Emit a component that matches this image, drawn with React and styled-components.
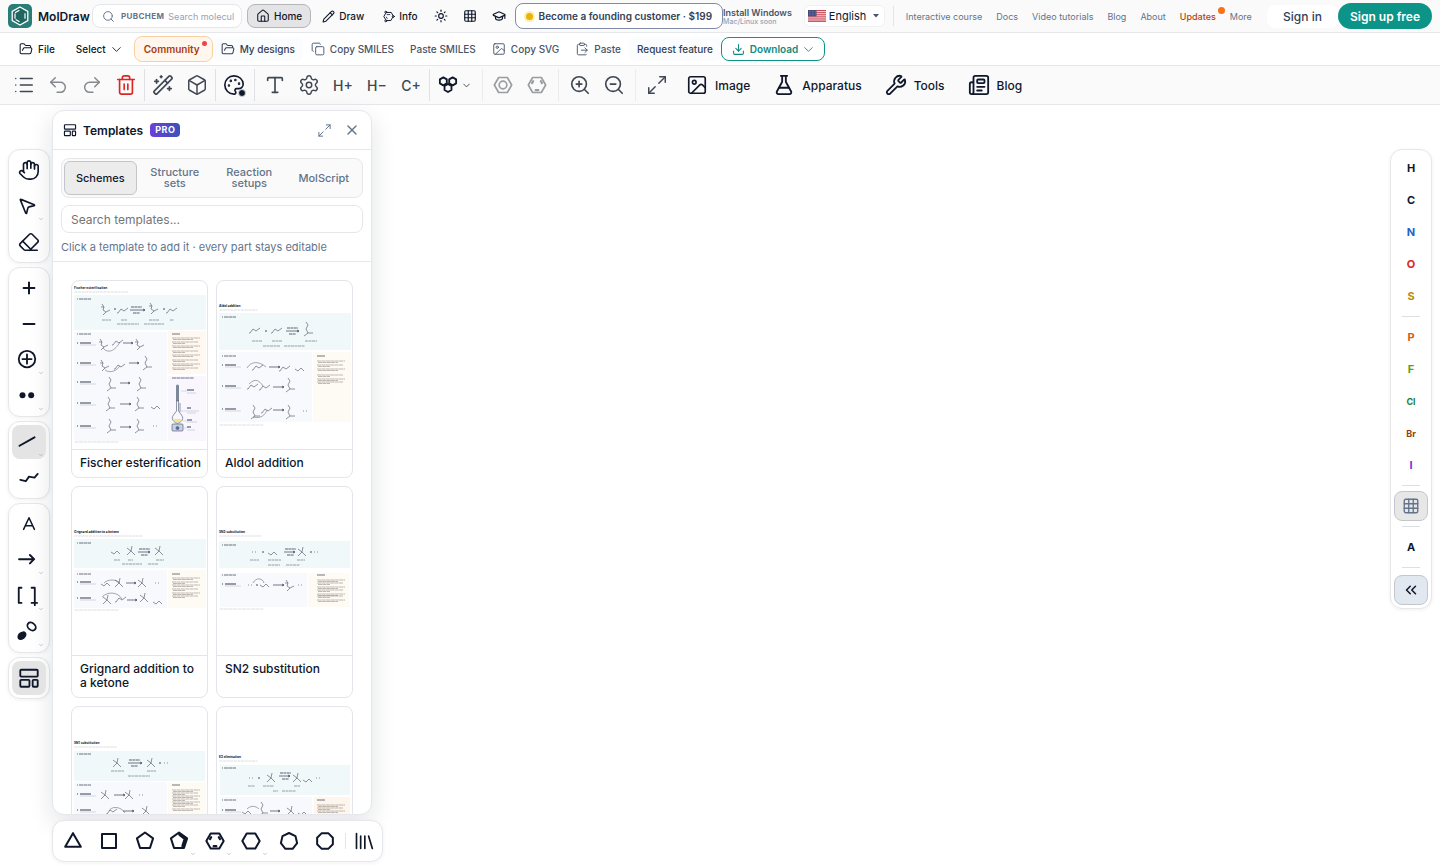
import React from "react";
import styled, { createGlobalStyle, css } from "styled-components";
import {
  Box,
  ChevronDown,
  ChevronsLeft,
  ClipboardPaste,
  Copy,
  Download,
  Eraser,
  FlaskConical,
  FolderOpen,
  GraduationCap,
  Grid3x3,
  Hand,
  House,
  Image as ImageIcon,
  List,
  Maximize2,
  MousePointer2,
  Newspaper,
  Palette,
  Pencil,
  Redo2,
  Search,
  Settings,
  Sun,
  Trash2,
  Type,
  Undo2,
  WandSparkles,
  Wrench,
  X,
  ZoomIn,
  ZoomOut,
} from "lucide-react";

const GlobalStyle = createGlobalStyle`
  * {
    box-sizing: border-box;
  }
  body {
    margin: 0;
    background: #fff;
    color: #0f172a;
    font-family: Inter, "Liberation Sans", sans-serif;
  }
  button, input, select {
    font-family: inherit;
    color: inherit;
    margin: 0;
  }
  button {
    cursor: pointer;
  }
  svg {
    display: block;
    flex-shrink: 0;
  }
`;

/* ---------- page ---------- */

const Page = styled.div`
  display: flex;
  flex-direction: column;
  height: 100vh;
  min-height: 620px;
  overflow: hidden;
`;

const Bar = styled.header`
  display: flex;
  align-items: center;
  flex-shrink: 0;
  height: 33px;
  padding: 0 8px;
  white-space: nowrap;
  background: #fafafa;
  border-bottom: 1px solid #e5e7eb;
`;

const FileRow = styled(Bar)`
  padding: 0 11px;
  background: #fff;
`;

const Spacer = styled.div`
  flex: 1;
`;

/* ---------- top bar ---------- */

const Brand = styled.a`
  display: flex;
  align-items: center;
  flex-shrink: 0;
  gap: 6px;
  width: 84px;
  font-size: 12px;
  font-weight: 600;
  color: #0f172a;
  text-decoration: none;
`;

const SearchBox = styled.label`
  display: flex;
  align-items: center;
  flex-shrink: 0;
  gap: 4px;
  width: 150px;
  height: 24px;
  padding: 0 7px 0 9px;
  background: #fff;
  border: 1px solid #e5e7eb;
  border-radius: 8px;
  color: #64748b;
`;

const SearchTag = styled.span`
  padding-left: 2px;
  font-size: 8px;
  font-weight: 700;
  letter-spacing: 0.4px;
`;

const SearchInput = styled.input`
  flex: 1;
  min-width: 0;
  padding: 0;
  border: 0;
  outline: 0;
  background: none;
  font-size: 9px;
  &::placeholder {
    color: #94a3b8;
  }
`;

const NavButton = styled.button`
  display: flex;
  align-items: center;
  justify-content: center;
  flex-shrink: 0;
  gap: 4px;
  height: 24px;
  padding: 0 8px;
  background: none;
  border: 1px solid transparent;
  border-radius: 8px;
  font-size: 10px;
  font-weight: 500;
  ${(p) =>
    p.$active &&
    css`
      margin: 0 2px 0 5px;
      background: #e4e4e6;
      border-color: #b4b6ba;
    `}
`;

const IconNav = styled(NavButton)`
  width: 29px;
  padding: 0;
`;

const FounderPill = styled.button`
  display: flex;
  align-items: center;
  flex-shrink: 0;
  gap: 5px;
  height: 26px;
  margin-left: 1px;
  padding: 0 10px 0 9px;
  background: #fff;
  border: 1px solid #7f8ba8;
  border-radius: 8px;
  color: #334155;
  font-size: 10px;
  font-weight: 600;
`;

const GoldDot = styled.span`
  width: 7px;
  height: 7px;
  margin: 0 1px;
  border-radius: 50%;
  background: #eab308;
  box-shadow: 0 0 0 2px #fdeeb5;
`;

const Install = styled.a`
  display: flex;
  flex-direction: column;
  color: #475569;
  font-size: 9px;
  font-weight: 600;
  line-height: 10px;
  text-decoration: none;
  small {
    color: #94a3b8;
    font-size: 7px;
    font-weight: 500;
    line-height: 7px;
  }
`;

const Language = styled.label`
  display: flex;
  align-items: center;
  flex-shrink: 0;
  gap: 3px;
  height: 22px;
  margin-left: 12px;
  padding: 0 5px 0 3px;
  background: #fff;
  border: 1px solid #f0f1f3;
  border-radius: 6px;
`;

const LanguageSelect = styled.select`
  width: 41px;
  padding: 0;
  appearance: none;
  border: 0;
  outline: 0;
  background: none;
  font-size: 11px;
`;

const TopLinks = styled.nav`
  display: flex;
  align-items: center;
  gap: 14px;
  margin-left: 8px;
  padding-left: 12px;
  border-left: 1px solid #e2e4e8;
  height: 20px;
`;

const TopLink = styled.a`
  position: relative;
  color: ${(p) => (p.$hot ? "#b2410e" : "#64748b")};
  font-size: 9px;
  font-weight: ${(p) => (p.$hot ? 500 : 400)};
  text-decoration: none;
`;

const Badge = styled.i`
  position: absolute;
  top: ${(p) => p.$top}px;
  right: ${(p) => p.$right}px;
  width: ${(p) => p.$size}px;
  height: ${(p) => p.$size}px;
  border-radius: 50%;
  background: ${(p) => p.$color};
`;

const SignIn = styled.a`
  padding: 4px 16px;
  background: #fff;
  border-radius: 8px;
  color: #334155;
  font-size: 12px;
  font-weight: 500;
  text-decoration: none;
`;

const SignUp = styled.button`
  height: 26px;
  padding: 0 12px;
  background: #0d9488;
  border: 0;
  border-radius: 13px;
  color: #fff;
  font-size: 12px;
  font-weight: 600;
`;

/* ---------- file bar ---------- */

const FileButton = styled.button`
  position: relative;
  display: flex;
  align-items: center;
  gap: 5px;
  height: 24px;
  padding: 0 8px;
  background: ${(p) => (p.$soft ? "#fafcfe" : "none")};
  border: 0;
  border-radius: 6px;
  color: ${(p) => p.$color || "#475569"};
  font-size: 10px;
  font-weight: 500;
`;

const SelectButton = styled(FileButton)`
  margin: 0 4px 0 5px;
`;

const DropArrow = styled(ChevronDown)`
  margin: 0 -2px;
`;

const CommunityButton = styled(FileButton)`
  height: 26px;
  padding: 0 12px 0 9px;
  background: #fff7ed;
  border: 1px solid #fbd0a0;
  border-radius: 8px;
  font-weight: 600;
`;

const DownloadButton = styled(FileButton)`
  padding: 0 10px;
  background: #fff;
  border: 1px solid #0d9488;
  border-radius: 8px;
  font-weight: 600;
`;

/* ---------- drawing toolbar ---------- */

const Toolbar = styled.div`
  display: flex;
  align-items: center;
  flex-shrink: 0;
  height: 39px;
  padding: 0 7px;
  background: #fafafa;
  border-bottom: 1px solid #e5e7eb;
  white-space: nowrap;
`;

const ToolButton = styled.button`
  position: relative;
  display: flex;
  align-items: center;
  justify-content: center;
  gap: 3px;
  width: ${(p) => (p.$wide ? 48 : 34)}px;
  height: 34px;
  padding: 0;
  background: none;
  border: 0;
  color: ${(p) => p.$color || "#3f4754"};
  font-size: 14px;
  font-weight: 500;
`;

const Divider = styled.span`
  width: 1px;
  height: 32px;
  margin: 0 ${(p) => p.$space}px;
  background: ${(p) => (p.$faint ? "#ececef" : "#dfe1e4")};
`;

const WideTool = styled.button`
  display: flex;
  align-items: center;
  gap: 7px;
  height: 34px;
  padding: 0 11px 0 12px;
  background: none;
  border: 0;
  font-size: 12px;
  font-weight: 500;
`;

const InkDot = styled.i`
  position: absolute;
  right: 5px;
  bottom: 5px;
  width: 8px;
  height: 8px;
  border: 1px solid #d5d7db;
  border-radius: 50%;
  background: #0f172a;
`;

/* ---------- workspace ---------- */

const Workspace = styled.main`
  display: flex;
  align-items: flex-start;
  flex: 1;
  min-height: 0;
  padding: 0 8px;
`;

const Rail = styled.aside`
  display: flex;
  flex-direction: column;
  gap: 4px;
  padding-top: 44px;
`;

const RailGroup = styled.div`
  display: flex;
  flex-direction: column;
  align-items: center;
  gap: 2px;
  width: 42px;
  padding: 3px;
  background: #fff;
  border: 1px solid #e5e7eb;
  border-radius: 12px;
  box-shadow: 0 1px 4px rgba(15, 23, 42, 0.06);
`;

const RailButton = styled.button`
  position: relative;
  display: flex;
  align-items: center;
  justify-content: center;
  width: 34px;
  height: 34px;
  padding: 0 ${(p) => (p.$more ? 4 : 0)}px 0 0;
  background: ${(p) => (p.$active ? "#e4e4e5" : "none")};
  border: 0;
  border-radius: 8px;
`;

const MoreMark = styled(ChevronDown)`
  position: absolute;
  right: 2px;
  bottom: 1px;
  color: #8a929e;
`;

const Column = styled.div`
  display: flex;
  flex-direction: column;
  align-items: flex-start;
  gap: 5px;
  height: 100%;
  margin-left: 2px;
  padding: 5px 0 6px;
`;

const Panel = styled.section`
  display: flex;
  flex-direction: column;
  flex: 1;
  width: 320px;
  min-height: 0;
  overflow: hidden;
  background: #fff;
  border: 1px solid #e5e7eb;
  border-radius: 12px;
  box-shadow: 0 8px 24px rgba(15, 23, 42, 0.12);
`;

const PanelHeader = styled.div`
  display: flex;
  align-items: center;
  flex-shrink: 0;
  height: 39px;
  padding: 0 5px 0 10px;
  border-bottom: 1px solid #e5e7eb;
`;

const PanelTitle = styled.h2`
  margin: 0 7px 0 6px;
  font-size: 12px;
  font-weight: 600;
`;

const ProTag = styled.span`
  padding: 0 5px;
  border-radius: 4px;
  background: linear-gradient(90deg, #6d3fd8, #3a53b8);
  color: #fff;
  font-size: 9px;
  font-weight: 700;
  line-height: 14px;
  letter-spacing: 0.5px;
`;

const PanelAction = styled.button`
  display: flex;
  align-items: center;
  justify-content: center;
  width: 28px;
  height: 28px;
  padding: 0;
  background: none;
  border: 0;
  color: #64748b;
`;

const PanelTools = styled.div`
  flex-shrink: 0;
  padding: 8px 8px 7px;
  border-bottom: 1px solid #e5e7eb;
`;

const Tabs = styled.div`
  display: grid;
  grid-template-columns: repeat(4, 1fr);
  gap: 2px;
  padding: 2px;
  background: #fafafa;
  border: 1px solid #e5e7eb;
  border-radius: 8px;
`;

const Tab = styled.button`
  height: 34px;
  padding: 0 4px;
  background: ${(p) => (p.$active ? "#ececed" : "none")};
  border: 1px solid ${(p) => (p.$active ? "#c3c5c9" : "transparent")};
  border-radius: 6px;
  color: ${(p) => (p.$active ? "#0f172a" : "#64748b")};
  font-size: 11px;
  font-weight: 500;
  line-height: 11px;
`;

const TemplateSearch = styled.input`
  display: block;
  width: 100%;
  height: 28px;
  margin-top: 7px;
  padding: 0 9px;
  border: 1px solid #e5e7eb;
  border-radius: 8px;
  outline: 0;
  font-size: 12px;
  &::placeholder {
    color: #757575;
  }
`;

const Hint = styled.p`
  margin: 7px 0 0;
  color: #64748b;
  font-size: 11px;
  line-height: 14px;
`;

const CardGrid = styled.div`
  display: grid;
  grid-template-columns: 1fr 1fr;
  grid-auto-rows: max-content;
  gap: 8px;
  flex: 1;
  min-height: 0;
  align-content: start;
  padding: 18px;
  overflow-y: auto;
  scrollbar-width: none;
`;

const Card = styled.button`
  display: flex;
  flex-direction: column;
  padding: 0;
  background: #fff;
  border: 1px solid #e2e5e9;
  border-radius: 8px;
  text-align: left;
`;

const CardTitle = styled.span`
  width: 100%;
  padding: 6px 4px 7px 8px;
  border-top: 1px solid #e2e5e9;
  font-size: 12px;
  font-weight: 500;
  line-height: 14px;
`;

const RingBar = styled.div`
  display: flex;
  align-items: center;
  gap: 2px;
  flex-shrink: 0;
  padding: 3px;
  background: #fff;
  border: 1px solid #e5e7eb;
  border-radius: 12px;
  box-shadow: 0 1px 4px rgba(15, 23, 42, 0.06);
`;

const RingDivider = styled.span`
  width: 1px;
  height: 16px;
  margin: 0 1px;
  background: #e2e5e9;
`;

const LibraryButton = styled(RailButton)`
  width: 30px;
`;

const Canvas = styled.div`
  flex: 1;
  align-self: stretch;
`;

const AtomButton = styled.button`
  display: flex;
  align-items: center;
  justify-content: center;
  width: 34px;
  height: 30px;
  padding: 0;
  background: ${(p) => p.$fill || "none"};
  border: 1px solid ${(p) => (p.$fill ? "#c3c7cd" : "transparent")};
  border-radius: 8px;
  color: ${(p) => p.$color || "#0f172a"};
  font-size: ${(p) => (p.$small ? 9 : 11)}px;
  font-weight: 700;
`;

const CollapseButton = styled(AtomButton)`
  margin-top: 2px;
`;

const AtomDivider = styled.span`
  width: 18px;
  height: 1px;
  margin: 3px 0;
  background: #dcdfe4;
`;

/* ---------- icons ---------- */

const ring = (sides, r, turn, cx = 12, cy = 12) =>
  Array.from({ length: sides }, (_, i) => {
    const a = ((turn + (360 / sides) * i) * Math.PI) / 180;
    return `${(cx + r * Math.cos(a)).toFixed(2)},${(cy + r * Math.sin(a)).toFixed(2)}`;
  }).join(" ");

const Glyph = ({ size = 24, weight = 2, children }) => (
  <svg
    width={size}
    height={size}
    viewBox="0 0 24 24"
    fill="none"
    stroke="currentColor"
    strokeWidth={weight}
    strokeLinecap="round"
    strokeLinejoin="round"
    aria-hidden="true"
  >
    {children}
  </svg>
);

const Logo = () => (
  <svg width="24" height="24" viewBox="0 0 24 24" aria-hidden="true">
    <rect width="24" height="24" rx="5" fill="#2a7c76" />
    <polygon points={ring(6, 9, -90)} fill="#206660" stroke="#fff" strokeWidth="1.3" />
    <path d="M11.4 6.2 7 8.8M7 9.4v5.4M17 9.2v5.6M7.6 15.4l4 2.4" stroke="#fff" strokeWidth="1.2" fill="none" />
  </svg>
);

const Molecule = () => (
  <Glyph size={13} weight={1.8}>
    <polygon points={ring(6, 8.6, 0)} />
    <path d="M9.500 8.500h5M8 13l1.500 2.500" strokeWidth="1.500" />
    <circle cx="7" cy="4" r="1.800" fill="#fafafa" />
    <circle cx="20.800" cy="12" r="1.800" fill="#fafafa" />
    <circle cx="7" cy="20" r="1.800" fill="#fafafa" />
  </Glyph>
);

const Flag = () => (
  <svg width="18" height="12" viewBox="0 0 18 12" aria-hidden="true">
    <rect width="18" height="12" rx="1" fill="#f3dfe2" />
    <path d="M0 .5h18M0 2.4h18M0 4.3h18M0 6.2h18M0 8.1h18M0 10h18M0 11.6h18" stroke="#c9404f" strokeWidth=".95" />
    <rect width="8.5" height="6.4" fill="#41497f" />
    <path d="M1 1.5h7M1 3.2h7M1 4.9h7" stroke="#a9aecb" strokeWidth=".5" strokeDasharray=".7 .8" />
  </svg>
);

const Caret = () => (
  <svg width="6" height="4" viewBox="0 0 6 4" aria-hidden="true">
    <path d="M0 0h6L3 3.6z" fill="#475569" />
  </svg>
);

const TemplateIcon = ({ size }) => (
  <Glyph size={size}>
    <rect x="2.5" y="3" width="19" height="7.5" rx="1" />
    <rect x="2.5" y="14" width="10" height="7.5" rx="1" />
    <rect x="16" y="14" width="5.5" height="7.5" rx="1" />
  </Glyph>
);

const Cluster = () => (
  <Glyph size={20} weight={2.2}>
    <polygon points={ring(6, 4.8, -90, 6.4, 7.6)} />
    <polygon points={ring(6, 4.8, -90, 17.6, 7.6)} />
    <polygon points={ring(6, 4.8, -90, 12, 15.6)} />
  </Glyph>
);

const hexBonds = (
  <>
    <polygon points={ring(6, 10.4, 0)} />
    <path d="M10.400 18.200h3.200M6 9.700l1.400-2.400M16.600 7.300l1.400 2.400" strokeWidth="2.600" />
  </>
);

const ringTools = [
  { name: "Cyclopropane", icon: <path d="M12 2.6 21.400 19H2.6z" /> },
  { name: "Cyclobutane", icon: <rect x="3.6" y="3.600" width="16.8" height="16.8" /> },
  { name: "Cyclopentane", icon: <polygon points={ring(5, 10.2, -90, 12, 12)} /> },
  {
    name: "Cyclopentadiene",
    more: true,
    icon: (
      <>
        <polygon points={ring(5, 10.2, -90, 12, 12)} />
        <path d="M13 4.200 19.600 9.200 16.800 18" strokeWidth="4" />
      </>
    ),
  },
  { name: "Benzene", more: true, icon: hexBonds },
  { name: "Cyclohexane", more: true, icon: <polygon points={ring(6, 10.4, 0)} /> },
  { name: "Cycloheptane", icon: <polygon points={ring(7, 10, -90, 12, 12.4)} /> },
  { name: "Cyclooctane", icon: <polygon points={ring(8, 10.2, 22.5)} /> },
];

/* ---------- template thumbnails ---------- */

const shapes = {
  branch: "M-4-5l2 3-1 3 3 2 4-2M-2-2h-3M0 3l-3 3",
  zig: "M-5 3l3-4 3 2 4-3M-5 3h-1",
  tall: "M-1-7l2 3-2 4 2 4h5M1 4l-4 3",
  cross: "M-4-3l4 3 4 4M0 0l1-5M0 0l-4 4",
  chain: "M-5 1l3 2 3-3 3 3",
  dots: "M-2 0h1M1 0h1",
  plus: "M-1 0h2M0-1v2",
};

const schemes = [
  {
    name: "Fischer esterification",
    top: 7,
    boxes: [[14, 35, 2, 132, "#f0f8f9"], [51, 109, 2, 93, "#f7f9fd"], [50, 43, 96, 38, "#fef8f0"], [95, 65, 96, 38, "#f9f6fd"]],
    mols: [["branch", 34, 28], ["plus", 43, 28], ["zig", 51, 29], ["branch", 82, 27], ["plus", 92, 28], ["zig", 100, 29],
      ["branch", 32, 63], ["zig", 46, 61], ["branch", 68, 63], ["branch", 33, 84], ["zig", 48, 85], ["tall", 74, 82],
      ["tall", 38, 103], ["tall", 68, 103], ["tall", 37, 123], ["tall", 66, 123], ["chain", 84, 125],
      ["tall", 38, 145], ["tall", 66, 145], ["dots", 83, 145]],
    arrows: [[58, 29, 15], [51, 62, 10], [57, 82, 10], [48, 102, 10], [48, 123, 11], [48, 146, 11]],
    curves: "M31 67c5 6 12 3 17-6M33 89c6 4 12 0 15-4",
    labels: [[30, 39, 9], [49, 39, 6], [77, 39, 10], [98, 39, 4], [45, 43, 22], [72, 43, 20]],
    steps: [62, 82, 101, 122, 145],
    section: [18, 53],
    notes: [57, 61, 65, 70, 74, 79, 83, 87],
    foot: 161,
    apparatus: true,
  },
  {
    name: "Aldol addition",
    top: 25,
    boxes: [[32, 37, 2, 132, "#f0f8f9"], [71, 70, 2, 93, "#f7f9fd"], [71, 70, 96, 38, "#fefaf4"]],
    mols: [["zig", 38, 49], ["plus", 49, 50], ["zig", 60, 49], ["tall", 90, 48], ["zig", 41, 86], ["zig", 68, 87], ["chain", 83, 87],
      ["zig", 36, 105], ["zig", 48, 106], ["tall", 72, 104], ["tall", 37, 131], ["zig", 50, 129], ["tall", 72, 131], ["dots", 88, 130]],
    arrows: [[69, 50, 13], [52, 86, 11], [56, 106, 11], [56, 129, 11]],
    curves: "M30 87c4-7 12-7 19-1M32 103c6-6 10-4 14 2M36 136c8 2 12-2 14-7",
    labels: [[35, 60, 10], [55, 60, 10], [88, 60, 12], [46, 65, 17], [67, 65, 21]],
    steps: [84, 105, 128],
    section: [36, 75],
    notes: [80, 84, 88, 94, 98, 101],
    foot: 144,
  },
  {
    name: "Grignard addition to a ketone",
    top: 45,
    boxes: [[52, 29, 2, 132, "#f0f8f9"], [83, 38, 2, 93, "#f7f9fd"], [83, 38, 96, 38, "#fefaf4"]],
    mols: [["chain", 44, 64], ["cross", 59, 64], ["cross", 87, 64], ["chain", 34, 96], ["cross", 47, 96], ["cross", 70, 96], ["dots", 85, 96],
      ["cross", 35, 113], ["zig", 49, 112], ["cross", 72, 111], ["chain", 86, 114]],
    arrows: [[66, 65, 12], [54, 96, 10], [55, 113, 10]],
    curves: "M32 96c4-4 12-4 16 0M30 110c6-6 16-5 20 2",
    labels: [[42, 73, 6], [56, 73, 5], [84, 73, 8], [50, 77, 20], [76, 77, 10]],
    steps: [95, 111],
    section: [56, 87],
    notes: [91, 95, 98, 102, 106, 109],
    foot: 123,
  },
  {
    name: "SN2 substitution",
    top: 45,
    boxes: [[54, 27, 2, 131, "#f0f8f9"], [86, 34, 3, 87, "#f7f9fd"], [86, 34, 91, 41, "#fefaf4"]],
    mols: [["dots", 37, 65], ["plus", 46, 65], ["chain", 56, 65], ["cross", 85, 65], ["plus", 94, 65], ["dots", 99, 65],
      ["dots", 33, 98], ["plus", 40, 98], ["chain", 48, 97], ["branch", 73, 98], ["dots", 83, 98]],
    arrows: [[67, 65, 11], [56, 98, 11]],
    curves: "M36 96c3-6 10-5 11 0",
    labels: [[33, 73, 9], [51, 73, 13], [80, 73, 8], [51, 78, 12], [69, 78, 14]],
    steps: [97],
    section: [58, 88],
    notes: [93, 96, 100, 103, 107, 109, 113],
    foot: 122,
  },
  {
    name: "SN1 substitution",
    top: 36,
    boxes: [[44, 30, 2, 131, "#f0f8f9"], [75, 93, 2, 93, "#f7f9fd"], [75, 93, 96, 38, "#fefaf4"]],
    mols: [["cross", 45, 56], ["cross", 79, 56], ["plus", 88, 56], ["dots", 94, 56], ["cross", 33, 88], ["cross", 57, 88], ["dots", 69, 88],
      ["zig", 40, 104], ["cross", 74, 104]],
    arrows: [[56, 56, 14], [42, 88, 11], [51, 104, 11]],
    curves: "M37 104c2-5 12-5 16 2",
    labels: [[39, 64, 13], [75, 64, 9], [56, 69, 22]],
    steps: [87, 103],
    section: [47, 78],
    notes: [83, 86, 89, 92, 95, 98, 102],
    foot: 164,
  },
  {
    name: "E2 elimination",
    top: 50,
    boxes: [[58, 30, 3, 130, "#f0f8f9"], [90, 78, 3, 92, "#f7f9fd"], [90, 78, 97, 36, "#fef5ec"]],
    mols: [["dots", 34, 71], ["plus", 42, 71], ["cross", 54, 71], ["cross", 80, 71], ["chain", 91, 72], ["dots", 101, 71],
      ["chain", 30, 104], ["tall", 45, 102], ["cross", 74, 104], ["chain", 86, 105]],
    arrows: [[62, 69, 11], [53, 104, 10]],
    curves: "M30 102c4-4 9-3 12 0",
    labels: [[31, 79, 7], [46, 79, 11], [77, 79, 6], [56, 84, 5], [65, 84, 14]],
    steps: [103],
    section: [61, 93],
    notes: [98, 101, 104],
    foot: 166,
  },
];

const Apparatus = () => (
  <g fill="none" stroke="#475569" strokeWidth=".6">
    <path d="M105.500 105v14" stroke="#7d8898" strokeWidth="3" strokeLinecap="round" />
    <path d="M104.500 119v11l-3 4a5 5 0 1 0 8 0l-3-4v-11M108 122v9" />
    <path d="M101.200 138h8.600a4.500 4.500 0 0 1-8.600 0z" fill="#efe87c" stroke="none" />
    <rect x="100" y="143" width="11" height="7" rx="1" fill="#c7d0e6" />
    <circle cx="105.500" cy="147" r="1.500" fill="#5b6aa0" />
    <path d="M109 110h6M109 130h6M111 140h4M111 147h4" stroke="#a8b0bc" strokeWidth=".4" />
    <path d="M115 109h7M115 127h4M115 139h5M115 146h4" stroke="#334155" strokeWidth="1" />
    <path d="M115 112h9M115 130h12M115 132h9M115 141h10M115 149h8" stroke="#a8b0bc" strokeWidth=".5" />
  </g>
);

const Thumbnail = ({ scheme }) => (
  <svg width="100%" height="168" viewBox="0 0 135 168" role="img" aria-label={`${scheme.name} preview`}>
    <text x="2" y={scheme.top + 1} fontSize="3.2" fontWeight="700" fill="#0f172a">
      {scheme.name}
    </text>
    <path d={`M2.500 ${scheme.top + 4}h${scheme.name.length * 2 + 10}`} stroke="#c9ced6" strokeWidth=".7" strokeDasharray="3 .6" />
    {scheme.boxes.map(([y, h, x, w, fill]) => (
      <rect key={`${x}-${y}`} x={x} y={y} width={w} height={h} rx="1" fill={fill} />
    ))}
    {scheme.section.map((y) => (
      <path key={y} d={`M5 ${y}h1M7 ${y}h12`} stroke="#5b6472" strokeWidth=".9" strokeDasharray="4 .4" />
    ))}
    {scheme.mols.map(([shape, x, y]) => (
      <path key={`${x}-${y}`} transform={`translate(${x} ${y})`} d={shapes[shape]} fill="none" stroke="#5d6674" strokeWidth=".7" />
    ))}
    {scheme.arrows.map(([x, y, w]) => (
      <path key={`${x}-${y}`} d={`M${x} ${y}h${w}m-2-1l2 1-2 1`} fill="none" stroke="#334155" strokeWidth=".7" />
    ))}
    <path
      d={`M${scheme.arrows[0][0] + 1} ${scheme.arrows[0][1] - 3}h11m-9 6h7`}
      stroke="#5b6472"
      strokeWidth="1"
      strokeDasharray="3 .4"
    />
    <path d={scheme.curves} fill="none" stroke="#475569" strokeWidth=".5" />
    {scheme.labels.map(([x, y, w]) => (
      <path key={`${x}-${y}`} d={`M${x} ${y}h${w}`} stroke="#8d95a1" strokeWidth=".9" strokeDasharray="3 .5" />
    ))}
    {scheme.steps.map((y) => (
      <g key={y}>
        <path d={`M5 ${y}h1M8 ${y}h11`} stroke="#334155" strokeWidth="1.200" />
        <path d={`M8 ${y + 2}h16`} stroke="#b0b7c2" strokeWidth=".5" />
      </g>
    ))}
    <path d={`M100 ${scheme.section[1]}h8`} stroke="#5b6472" strokeWidth=".9" />
    {scheme.notes.map((y, i) => (
      <path
        key={y}
        d={`M100 ${y}h${i % 2 ? 26 : 28}M101 ${y + 1.5}h${i % 2 ? 12 : 20}`}
        stroke="#948d86"
        strokeWidth=".6"
        strokeDasharray="4 .4"
      />
    ))}
    <path d={`M2.500 ${scheme.foot}h44`} stroke="#c3c9d1" strokeWidth=".6" strokeDasharray="4 .5" />
    {scheme.apparatus && (
      <>
        <path d="M100 97h22" stroke="#5b6472" strokeWidth=".9" strokeDasharray="4 .4" />
        <Apparatus />
      </>
    )}
  </svg>
);

/* ---------- rails ---------- */

const railGroups = [
  [
    { name: "Pan", icon: <Hand size={22} strokeWidth={1.8} /> },
    { name: "Select", icon: <MousePointer2 size={20} strokeWidth={2} />, more: true },
    { name: "Erase", icon: <Eraser size={22} strokeWidth={1.8} /> },
  ],
  [
    { name: "Plus", icon: <Glyph size={20} weight={2.4}><path d="M12 5.500v13M5.500 12h13" /></Glyph> },
    { name: "Minus", icon: <Glyph size={20} weight={2.4}><path d="M5.500 12h13" /></Glyph> },
    {
      name: "Charge",
      icon: <Glyph size={22}><circle cx="12" cy="11" r="9" /><path d="M12 6v10M7 11h10" /></Glyph>,
      more: true,
    },
    {
      name: "Electrons",
      icon: (
        <Glyph size={20}>
          <g fill="currentColor" stroke="none">
            <circle cx="6.600" cy="11" r="3.600" />
            <circle cx="17" cy="11" r="3.600" />
          </g>
        </Glyph>
      ),
      more: true,
    },
  ],
  [
    { name: "Bond", icon: <Glyph size={20} weight={2.4}><path d="M3 16.500 21 6.500" /></Glyph>, active: true, more: true },
    { name: "Chain", icon: <Glyph size={22}><path d="M2.500 14l6 1.500 3.500-5 6 1 3.500-4" /></Glyph> },
  ],
  [
    { name: "Text", icon: <Glyph size={20} weight={1.8}><path d="M5.500 18.500 12 4.500l6.500 14M8 14h8" /></Glyph> },
    { name: "Arrow", icon: <Glyph size={20} weight={2.4}><path d="M2.500 11h18M15.500 6l5 5-5 5" /></Glyph>, more: true },
    {
      name: "Brackets",
      icon: <Glyph size={22}><path d="M6 3H3v16.500h3M17 3h3.500v16.500M17 19.500h6M20.500 17v5" /></Glyph>,
      more: true,
    },
    {
      name: "Orbitals",
      icon: (
        <Glyph size={22}>
          <ellipse cx="6.500" cy="16" rx="4.500" ry="3" transform="rotate(-40 6.500 16)" fill="currentColor" />
          <ellipse cx="17" cy="6" rx="5" ry="3.800" transform="rotate(40 17 6)" />
        </Glyph>
      ),
      more: true,
    },
  ],
  [{ name: "Templates", icon: <TemplateIcon size={22} />, active: true }],
];

const atomsTop = [["H", "#0f172a"], ["C", "#0f172a"], ["N", "#2563c9"], ["O", "#dc2626"], ["S", "#c08a0a"]];
const atomsLow = [["P", "#dd5a14"], ["F", "#57a010"], ["Cl", "#15803d"], ["Br", "#92400e"], ["I", "#6d35d8"]];

const topLinks = ["Interactive course", "Docs", "Video tutorials", "Blog", "About"];

const Atoms = ({ items }) =>
  items.map(([symbol, color]) => (
    <AtomButton key={symbol} $color={color} $small={symbol.length > 1}>
      {symbol}
    </AtomButton>
  ));

const TopBar = () => (
  <Bar>
    <Brand href="#">
      <Logo />
      MolDraw
    </Brand>
    <SearchBox>
      <Search size={13} strokeWidth={1.8} />
      <SearchTag>PUBCHEM</SearchTag>
      <SearchInput type="text" placeholder="Search molecules" />
    </SearchBox>
    <NavButton $active>
      <House size={14} strokeWidth={1.8} />
      Home
    </NavButton>
    <NavButton>
      <Pencil size={13} />
      Draw
    </NavButton>
    <NavButton>
      <Molecule />
      Info
    </NavButton>
    <IconNav aria-label="Light mode"><Sun size={14} /></IconNav>
    <IconNav aria-label="Periodic table"><Grid3x3 size={14} /></IconNav>
    <IconNav aria-label="Learn"><GraduationCap size={14} /></IconNav>
    <FounderPill>
      <GoldDot />
      Become a founding customer · $199
    </FounderPill>
    <Install href="#">
      Install Windows
      <small>Mac/Linux soon</small>
    </Install>
    <Language>
      <Flag />
      <LanguageSelect aria-label="Language" defaultValue="en">
        <option value="en">English</option>
      </LanguageSelect>
      <Caret />
    </Language>
    <TopLinks>
      {topLinks.map((label) => (
        <TopLink key={label} href="#">{label}</TopLink>
      ))}
      <TopLink href="#" $hot>
        Updates
        <Badge $size={7} $top={-4} $right={-9} $color="#f97316" />
      </TopLink>
      <TopLink href="#">More</TopLink>
    </TopLinks>
    <Spacer />
    <SignIn href="#">Sign in</SignIn>
    <SignUp>Sign up free</SignUp>
  </Bar>
);

const FileBar = () => (
  <FileRow as="div">
    <FileButton $color="#0f172a"><FolderOpen size={14} strokeWidth={1.8} />File</FileButton>
    <SelectButton $color="#0f172a">Select<DropArrow size={15} strokeWidth={1.4} /></SelectButton>
    <CommunityButton $color="#a93b12">
      Community
      <Badge $size={5} $top={4} $right={5} $color="#ef4444" />
    </CommunityButton>
    <FileButton $soft $color="#334155"><FolderOpen size={14} strokeWidth={1.8} />My designs</FileButton>
    <FileButton><Copy size={14} strokeWidth={1.6} />Copy SMILES</FileButton>
    <FileButton>Paste SMILES</FileButton>
    <FileButton><ImageIcon size={14} strokeWidth={1.6} />Copy SVG</FileButton>
    <FileButton><ClipboardPaste size={14} strokeWidth={1.6} />Paste</FileButton>
    <FileButton $soft $color="#334155">Request feature</FileButton>
    <DownloadButton $color="#0f8a7e">
      <Download size={13} />
      Download
      <DropArrow size={15} strokeWidth={1.4} />
    </DownloadButton>
  </FileRow>
);

const DrawBar = () => (
  <Toolbar>
    <ToolButton aria-label="Menu"><List size={22} strokeWidth={1.6} /></ToolButton>
    <ToolButton aria-label="Undo" $color="#84898f"><Undo2 size={22} strokeWidth={1.6} /></ToolButton>
    <ToolButton aria-label="Redo" $color="#84898f"><Redo2 size={22} strokeWidth={1.6} /></ToolButton>
    <ToolButton aria-label="Delete" $color="#dc2626"><Trash2 size={22} strokeWidth={1.8} /></ToolButton>
    <Divider $space={1} />
    <ToolButton aria-label="Clean up"><WandSparkles size={22} strokeWidth={1.8} /></ToolButton>
    <ToolButton aria-label="3D view"><Box size={22} strokeWidth={1.6} /></ToolButton>
    <Divider $space={1} />
    <ToolButton aria-label="Colors" $color="#0f172a">
      <Palette size={22} strokeWidth={1.8} />
      <InkDot />
    </ToolButton>
    <Divider $space={3} />
    <ToolButton aria-label="Text style"><Type size={22} strokeWidth={1.8} /></ToolButton>
    <ToolButton aria-label="Settings"><Settings size={22} strokeWidth={1.6} /></ToolButton>
    <ToolButton>H+</ToolButton>
    <ToolButton>H−</ToolButton>
    <ToolButton>C+</ToolButton>
    <Divider $space={1} />
    <ToolButton $wide aria-label="Fused rings" $color="#0f172a">
      <Cluster />
      <ChevronDown size={11} strokeWidth={1.6} />
    </ToolButton>
    <Divider $space={3} $faint />
    <ToolButton aria-label="Aromatic ring" $color="#9a9da2">
      <Glyph size={20}>
        <polygon points={ring(6, 10.4, 0)} />
        <circle cx="12" cy="12" r="4.6" />
      </Glyph>
    </ToolButton>
    <ToolButton aria-label="Kekule ring" $color="#9a9da2"><Glyph size={20}>{hexBonds}</Glyph></ToolButton>
    <Divider $space={4} $faint />
    <ToolButton aria-label="Zoom in"><ZoomIn size={22} strokeWidth={1.8} /></ToolButton>
    <ToolButton aria-label="Zoom out"><ZoomOut size={22} strokeWidth={1.8} /></ToolButton>
    <Divider $space={4} $faint />
    <ToolButton aria-label="Fit to screen"><Maximize2 size={22} strokeWidth={1.6} /></ToolButton>
    <WideTool><ImageIcon size={22} strokeWidth={1.8} />Image</WideTool>
    <WideTool><FlaskConical size={22} />Apparatus</WideTool>
    <WideTool><Wrench size={22} />Tools</WideTool>
    <WideTool><Newspaper size={22} />Blog</WideTool>
  </Toolbar>
);

const TemplatesPanel = () => (
  <Panel>
    <PanelHeader>
      <TemplateIcon size={14} />
      <PanelTitle>Templates</PanelTitle>
      <ProTag>PRO</ProTag>
      <Spacer />
      <PanelAction aria-label="Expand"><Maximize2 size={15} strokeWidth={1.6} /></PanelAction>
      <PanelAction aria-label="Close"><X size={16} /></PanelAction>
    </PanelHeader>
    <PanelTools>
      <Tabs role="tablist">
        {["Schemes", "Structure sets", "Reaction setups", "MolScript"].map((tab, i) => (
          <Tab key={tab} role="tab" aria-selected={i === 0} $active={i === 0}>
            {tab}
          </Tab>
        ))}
      </Tabs>
      <TemplateSearch type="text" placeholder="Search templates..." aria-label="Search templates" />
      <Hint>Click a template to add it · every part stays editable</Hint>
    </PanelTools>
    <CardGrid>
      {schemes.map((scheme) => (
        <Card key={scheme.name}>
          <Thumbnail scheme={scheme} />
          <CardTitle>{scheme.name}</CardTitle>
        </Card>
      ))}
    </CardGrid>
  </Panel>
);

const App = () => {
  return (
    <>
      <GlobalStyle />
      <Page>
        <TopBar />
        <FileBar />
        <DrawBar />
        <Workspace>
          <Rail>
            {railGroups.map((group) => (
              <RailGroup key={group[0].name}>
                {group.map((tool) => (
                  <RailButton key={tool.name} aria-label={tool.name} $active={tool.active} $more={tool.more}>
                    {tool.icon}
                    {tool.more && <MoreMark size={6} />}
                  </RailButton>
                ))}
              </RailGroup>
            ))}
          </Rail>
          <Column>
            <TemplatesPanel />
            <RingBar>
              {ringTools.map((tool) => (
                <RailButton key={tool.name} aria-label={tool.name} $more={tool.more}>
                  <Glyph size={20} weight={2.4}>{tool.icon}</Glyph>
                  {tool.more && <MoreMark size={6} />}
                </RailButton>
              ))}
              <RingDivider />
              <LibraryButton aria-label="Library">
                <Glyph size={20}>
                  <path d="M3 3v18M8 6v15M13 6v15M17.500 6l4.500 15" />
                </Glyph>
              </LibraryButton>
            </RingBar>
          </Column>
          <Canvas />
          <Rail>
            <RailGroup>
              <Atoms items={atomsTop} />
              <AtomDivider />
              <Atoms items={atomsLow} />
              <AtomDivider />
              <AtomButton aria-label="Periodic table" $fill="#e7e7e8" $color="#64748b">
                <Grid3x3 size={18} strokeWidth={1.8} />
              </AtomButton>
              <AtomDivider />
              <AtomButton>A</AtomButton>
              <AtomDivider />
              <CollapseButton aria-label="Collapse" $fill="#e2e8f0">
                <ChevronsLeft size={18} />
              </CollapseButton>
            </RailGroup>
          </Rail>
        </Workspace>
      </Page>
    </>
  );
};

export default App;
